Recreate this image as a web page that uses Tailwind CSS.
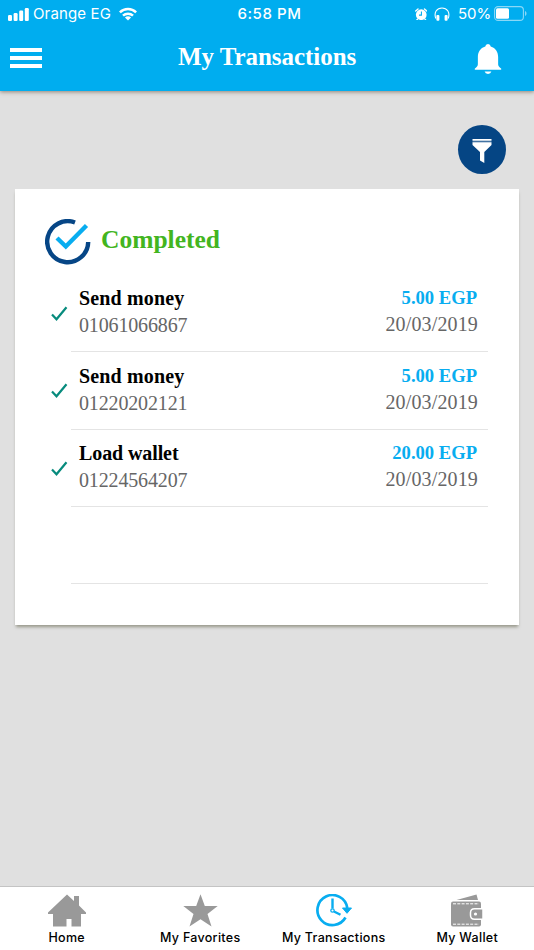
<!DOCTYPE html>
<html lang="en">
<head>
<meta charset="utf-8">
<meta name="viewport" content="width=device-width, initial-scale=1">
<title>My Transactions</title>
<script src="https://cdn.jsdelivr.net/npm/@tailwindcss/browser@4"></script>
</head>
<body class="bg-[#e0e0e0]">
<div class="flex h-[950px] w-[534px] flex-col overflow-hidden bg-[#e0e0e0] font-['Liberation_Serif',serif]">
  <header class="z-10 h-[90.5px] shrink-0 bg-[#00adef] text-white shadow-[0_1px_4px_rgba(90,70,50,0.6)]">
    <div class="grid h-7 grid-cols-3 items-center font-['Inter',sans-serif] text-[15px] leading-7 whitespace-nowrap">
      <div class="flex items-center pl-2">
        <svg class="h-[13px] w-[21px]" viewBox="0 0 21 13" fill="#fff"><rect x="0" y="7" width="4" height="6" rx="1.2"/><rect x="5.6" y="5" width="4" height="8" rx="1.2"/><rect x="11.2" y="2.5" width="4" height="10.500" rx="1.2"/><rect x="16.8" y="0" width="4" height="13" rx="1.2"/></svg>
        <span class="ml-1 w-[86px] tracking-[0.15px]">Orange EG</span>
        <svg class="h-[14px] w-[18px]" viewBox="0 0 18 14" fill="none" stroke="#fff" stroke-width="2.5"><path d="M.9 5.300a11.600 11.600 0 0 1 16.200 0M4 8.700a7.200 7.200 0 0 1 10 0"/><path d="M9 13.400 5.900 10.500a4.700 4.700 0 0 1 6.200 0z" fill="#fff" stroke="none"/></svg>
      </div>
      <div class="pl-[5px] text-center text-[15px] font-medium tracking-[0.6px]">6:58 PM</div>
      <div class="flex items-center justify-end pr-[7px]">
        <svg class="h-[12.5px] w-[12.5px]" viewBox="0 0 14 14"><circle cx="7" cy="7.500" r="6" fill="#fff"/><path d="M.8 3.400 3.400 1M13.200 3.400 10.600 1M2.800 12.500l-.8.8M11.200 12.500l.8.8" stroke="#fff" stroke-width="1.500" fill="none" stroke-linecap="round"/><path d="M7.200 4v4H4.500" stroke="#00adef" stroke-width="1.200" fill="none"/></svg>
        <svg class="ml-[7px] h-[14px] w-[16px]" viewBox="0 0 16 14"><path d="M1.800 11.500C-.5 5 3.200 1 8 1s8.500 4 6.200 10.500" fill="none" stroke="#fff" stroke-width="1.100"/><rect x="2.400" y="8" width="3" height="5.700" rx="1" fill="#fff"/><rect x="10.600" y="8" width="3" height="5.700" rx="1" fill="#fff"/></svg>
        <span class="ml-2 w-[36px] tracking-[-0.05px]">50%</span>
        <svg class="mb-[2px] h-[15px] w-[33px]" viewBox="0 0 33 15"><rect x=".6" y=".6" width="28.800" height="13.800" rx="3.500" fill="none" stroke="#8ad8f7" stroke-width="1.100"/><rect x="2" y="2.200" width="13" height="10.600" rx="1.500" fill="#fff"/><path d="M31 5c2 .8 2 4.200 0 5z" fill="#8ad8f7"/></svg>
      </div>
    </div>
    <div class="flex h-[60px] items-center pr-[32px] pl-[10px]">
      <div class="flex w-8 flex-col gap-1"><i class="h-1 bg-white"></i><i class="h-1 bg-white"></i><i class="h-1 bg-white"></i></div>
      <h1 class="ml-[136px] pb-[3px] text-[25px] leading-[30px] font-bold tracking-[-0.05px] whitespace-nowrap">My Transactions</h1>
      <svg class="mt-[2px] ml-auto h-[31px] w-[28px]" viewBox="0 0 29 32" preserveAspectRatio="none" fill="#fff"><path d="M14.500 0a3 3 0 0 1 2.800 2.700C22.500 4.300 25 8.400 25 13.500V21c0 2 1.200 2.800 3 4.300.6.5.4 1.200-.4 1.200H1.400C.6 26.500.4 25.800 1 25.300 2.800 23.800 4 23 4 21v-7.500C4 8.400 6.500 4.300 11.700 2.700A3 3 0 0 1 14.500 0z"/><path d="M11 28.500h7a3.600 3.200 0 0 1-7 0z"/></svg>
    </div>
  </header>

  <main class="flex flex-1 flex-col px-[15px]">
    <div class="flex h-[98.500px] shrink-0 justify-end pt-[34.500px] pr-[13px]">
      <button class="flex h-[49px] w-[48px] items-center justify-center rounded-[50%] bg-[#054584]"><svg class="mt-[3px] mr-[1px] h-6 w-5" viewBox="0 0 20 24" fill="#fff"><path d="M.5 0h19v1.800H.5zM.5 3.300h19V6L12.300 13v11L8 21.500V13L.5 6z"/><path d="M.5 1.800h19v1.500H.5z" opacity=".25"/></svg></button>
    </div>
    <section class="h-[436px] shrink-0 bg-white pt-[30px] pl-[30px] shadow-[0_3px_3px_-1px_rgba(110,110,90,0.65)]">
      <div class="flex h-[55.800px]">
        <svg class="h-[47px] w-[47px]" viewBox="0 0 47 47" fill="none"><path d="M30 3.500A20.500 20.500 0 1 0 43.200 23" stroke="#064686" stroke-width="4.400"/><path d="m12 19 8.800 8.500L41.500 6.500" stroke="#08adf0" stroke-width="4.400"/></svg>
        <h2 class="pt-[5px] pl-[9px] text-[25.500px] leading-8 font-bold text-[#43b51f]">Completed</h2>
      </div>
      <ul class="w-[443px]">
        <li class="flex h-[77.400px]">
          <svg class="mt-[31px] ml-[6px] h-[16px] w-[20px] shrink-0" viewBox="0 0 20 16" fill="none" stroke="#078b7d" stroke-width="2.200"><path d="m1 8.500 4.500 4.800L15.500 1.200"/></svg>
          <div class="flex flex-1 justify-between border-b border-[#e4e4e4] pt-[10.500px] pr-[10px] pl-2 text-[20px] leading-[27px]">
            <div><p class="font-bold tracking-[0.15px] text-black">Send money</p><p class="tracking-[-0.15px] text-[#666]">01061066867</p></div>
            <div class="text-right"><p class="-mt-[1px] pr-px text-[18.600px] font-bold text-[#08adf0]">5.00 EGP</p><p class="tracking-[0.15px] text-[#666]">20/03/2019</p></div>
          </div>
        </li>
        <li class="flex h-[77.400px]">
          <svg class="mt-[31px] ml-[6px] h-[16px] w-[20px] shrink-0" viewBox="0 0 20 16" fill="none" stroke="#078b7d" stroke-width="2.200"><path d="m1 8.500 4.500 4.800L15.500 1.200"/></svg>
          <div class="flex flex-1 justify-between border-b border-[#e4e4e4] pt-[10.500px] pr-[10px] pl-2 text-[20px] leading-[27px]">
            <div><p class="font-bold tracking-[0.15px] text-black">Send money</p><p class="tracking-[-0.15px] text-[#666]">01220202121</p></div>
            <div class="text-right"><p class="-mt-[1px] pr-px text-[18.600px] font-bold text-[#08adf0]">5.00 EGP</p><p class="tracking-[0.15px] text-[#666]">20/03/2019</p></div>
          </div>
        </li>
        <li class="flex h-[77.400px]">
          <svg class="mt-[31px] ml-[6px] h-[16px] w-[20px] shrink-0" viewBox="0 0 20 16" fill="none" stroke="#078b7d" stroke-width="2.200"><path d="m1 8.500 4.500 4.800L15.500 1.200"/></svg>
          <div class="flex flex-1 justify-between border-b border-[#e4e4e4] pt-[10.500px] pr-[10px] pl-2 text-[20px] leading-[27px]">
            <div><p class="font-bold tracking-[-0.1px] text-black">Load wallet</p><p class="tracking-[-0.15px] text-[#666]">01224564207</p></div>
            <div class="text-right"><p class="-mt-[1px] pr-px text-[18.600px] font-bold text-[#08adf0]">20.00 EGP</p><p class="tracking-[0.15px] text-[#666]">20/03/2019</p></div>
          </div>
        </li>
        <li class="ml-[26px] h-[77.400px] border-b border-[#e4e4e4]"></li>
      </ul>
    </section>
  </main>

  <nav class="grid h-[64px] shrink-0 grid-cols-4 border-t border-[#c4c4c4] bg-white font-['Inter',sans-serif] text-[12.500px] leading-4 font-medium tracking-[0.3px] text-black">
    <a class="flex flex-col items-center pt-[7px]"><svg class="h-[33px] w-[38px]" viewBox="0 0 38 33" fill="#999"><path d="M19 .5 26 7V2h5v9.500l7 7V20h-5v12.500h-9.500V25h-5v7.500H5V20H0v-1.500z"/></svg><span class="mt-[3px]">Home</span></a>
    <a class="flex flex-col items-center pt-[7px]"><svg class="h-[33px] w-[35px]" viewBox="0 0 35 33" fill="#999"><path d="M17.500.3 21.800 12H34.700L24.500 20l4 12.500-11-7.200-11 7.200 4-12.500L.3 12h12.900z"/></svg><span class="mt-[3px]">My Favorites</span></a>
    <a class="flex flex-col items-center pt-[7px]"><svg class="h-[33px] w-[36px]" viewBox="0 0 36 33" fill="none" stroke="#08adf0"><path d="M31.300 14A15 15 0 1 0 29.500 23.500" stroke-width="2.700"/><path d="M26.500 14 35.500 14 31 19.300z" fill="#08adf0" stroke-width="1"/><path d="M16.500 4.500v10M18 17.500l6.500 3.300" stroke-width="2.400"/><circle cx="16.500" cy="16.500" r="1.700" stroke-width="1.300"/></svg><span class="mt-[3px] whitespace-nowrap">My Transactions</span></a>
    <a class="flex flex-col items-center pt-[7px]"><svg class="h-[33px] w-[32px]" viewBox="0 0 32 33"><path d="M5.500 6 25.500.5l1.500 5.500z" fill="#999"/><rect y="7.500" width="30" height="25" rx="2" fill="#999"/><path d="M2 9.800h26M2 30.200h26" stroke="#fff" stroke-width="1" stroke-dasharray="3 1.300"/><path d="M32 14.700h-8.500q-4 0-4 4v2.600q0 4 4 4H32z" fill="#999" stroke="#fff" stroke-width="1.500"/><circle cx="24.500" cy="20" r="1.600" fill="#fff"/></svg><span class="mt-[3px]">My Wallet</span></a>
  </nav>
</div>
</body>
</html>
